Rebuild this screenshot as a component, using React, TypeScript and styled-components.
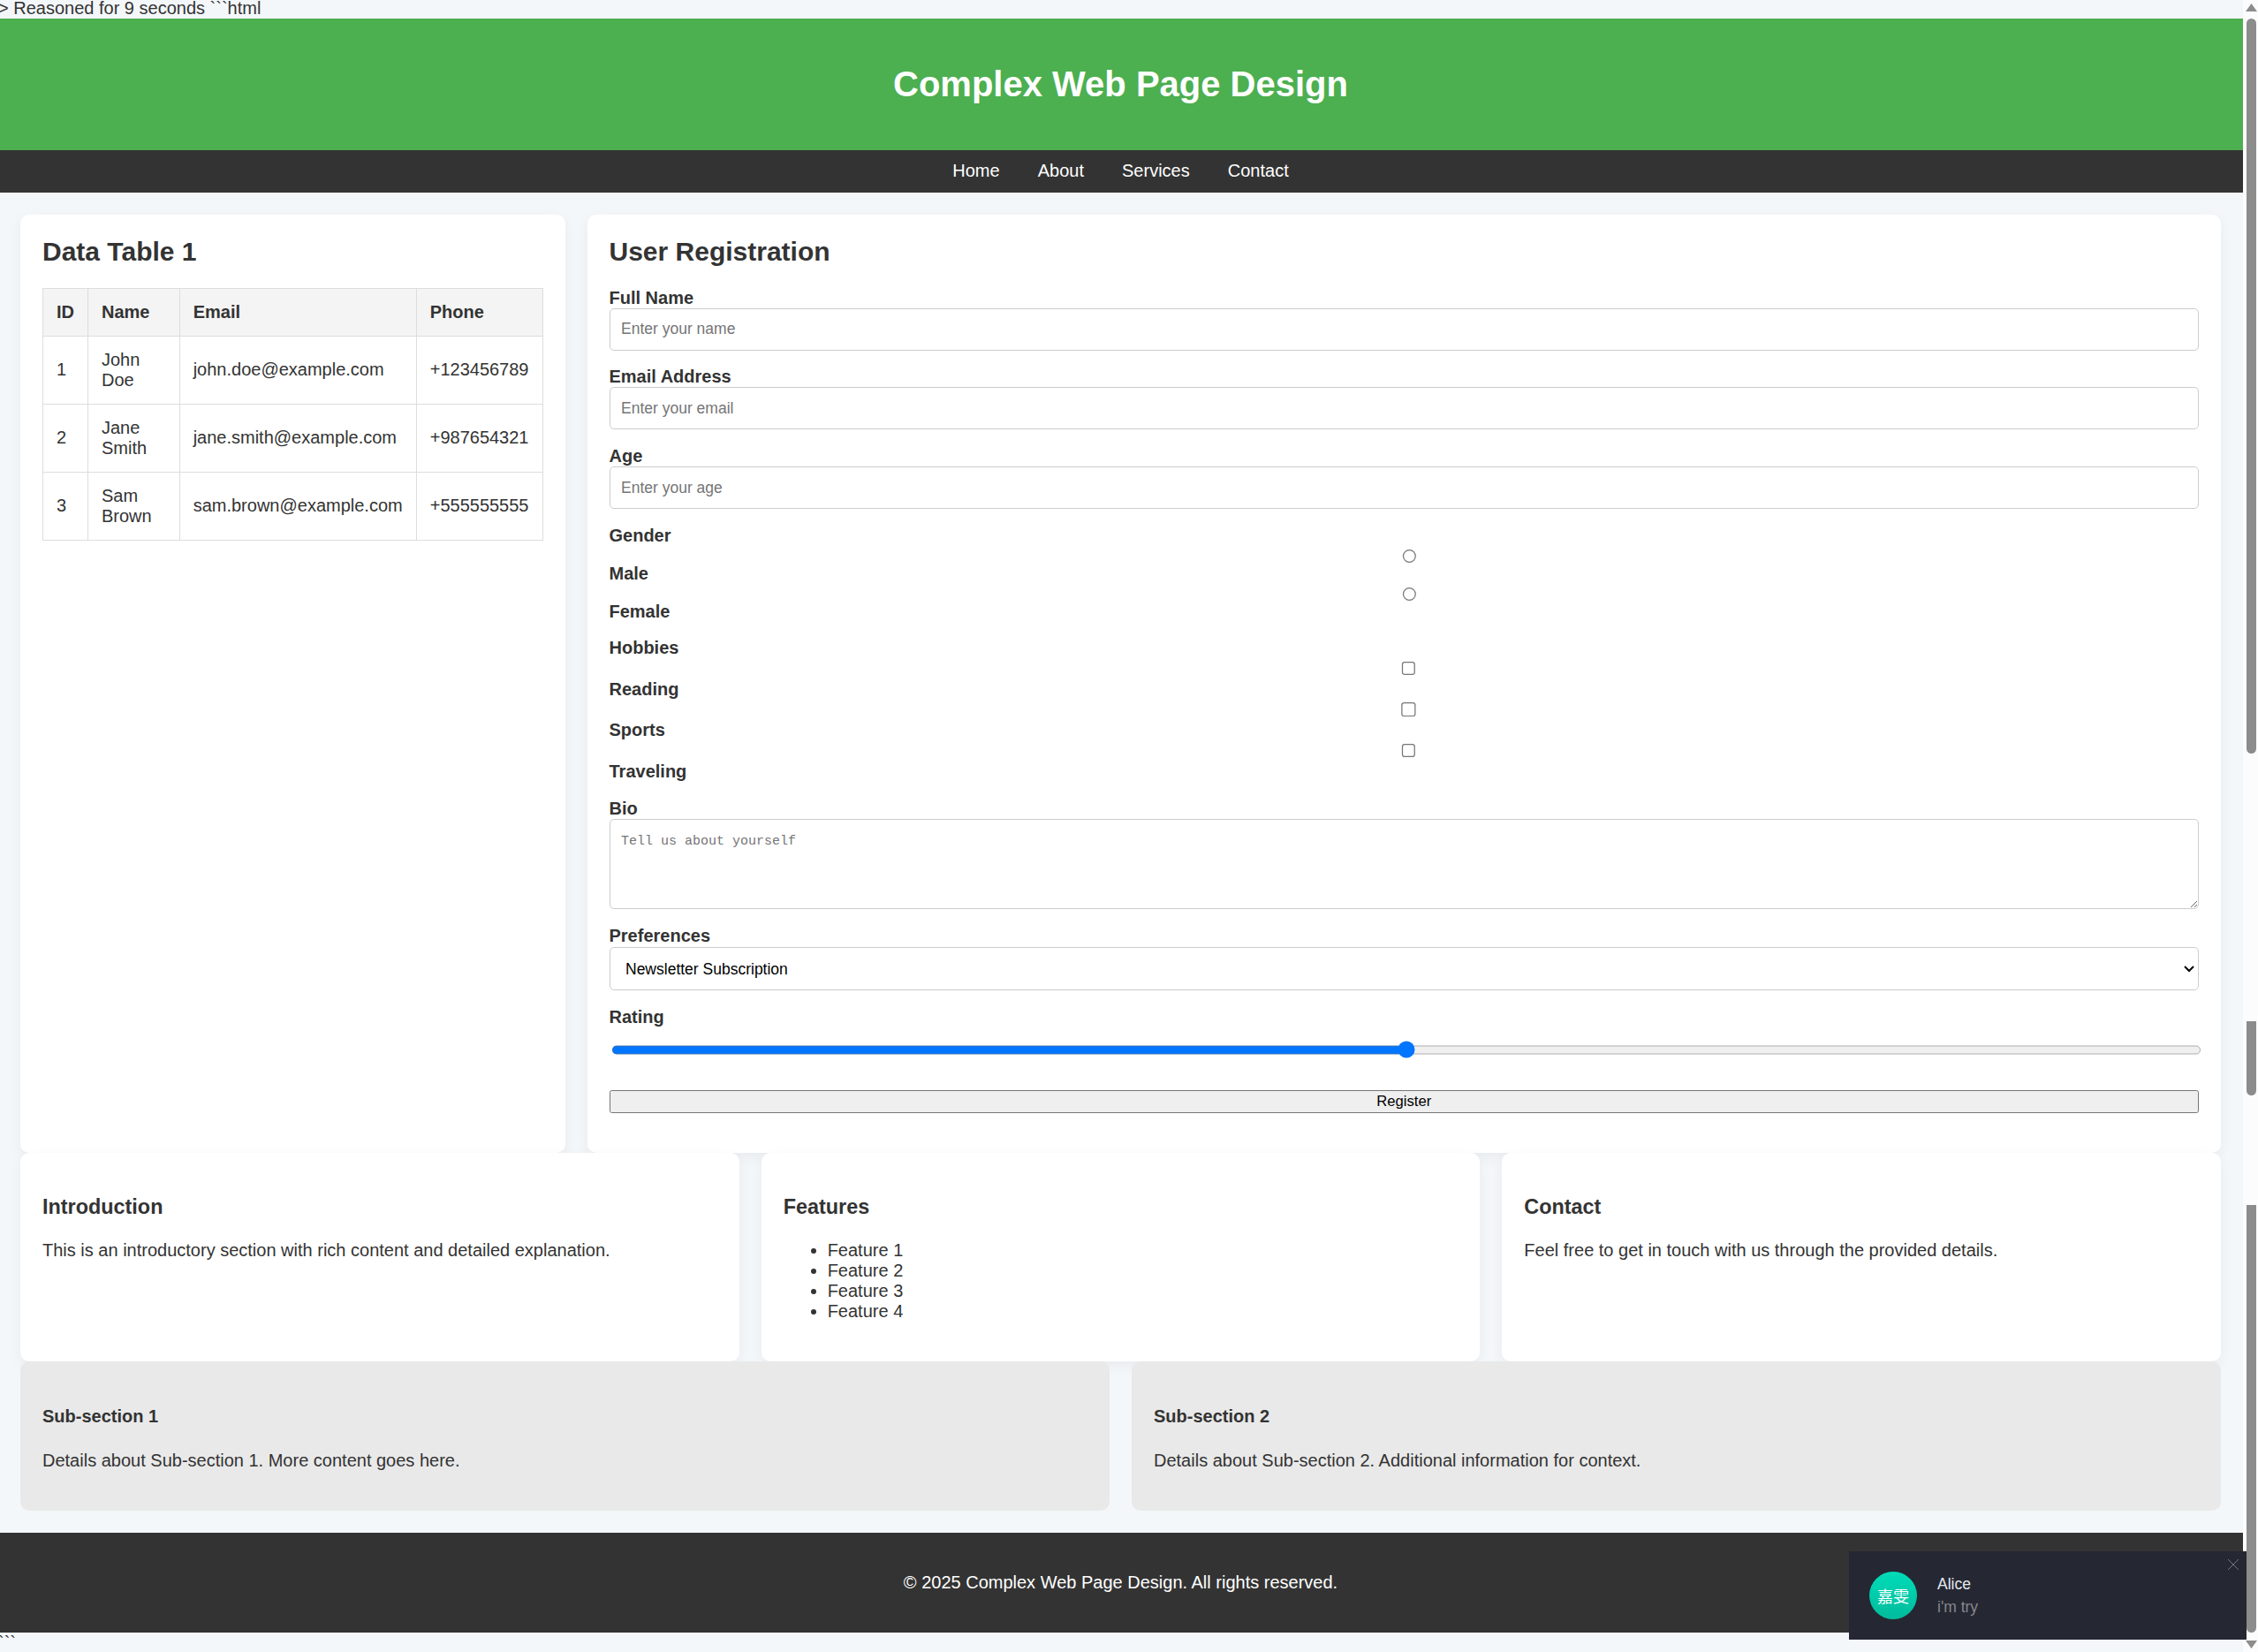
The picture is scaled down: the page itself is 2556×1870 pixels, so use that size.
import { FC } from 'react';
import styled, { createGlobalStyle } from 'styled-components';

const GlobalStyle = createGlobalStyle`
  html, body {
    margin: 0;
    width: 2556px;
    height: 1870px;
    overflow: hidden;
    background: #f4f7fa;
  }
`;

// the capture was taken at 125% browser zoom, scrolled 2px right and down
const Page = styled.div`
  zoom: 1.25;
  width: 2032.8px;
  margin: -1.6px 0 0 -1.6px;
  font-family: 'Liberation Sans', Arial, sans-serif;
  font-size: 16px;
  color: #333;
`;

const Header = styled.header`
  background: #4caf50;
  color: #fff;
  padding: 20px;
  text-align: center;
`;

const Title = styled.h1`
  margin: 21.44px 0;
  font-size: 32px;
`;

const Nav = styled.nav`
  display: flex;
  justify-content: center;
  gap: 34.45px;
  background: #333;
  padding: 10px;
`;

const NavLink = styled.a`
  color: #fff;
  text-decoration: none;
`;

const MainGrid = styled.div`
  display: grid;
  grid-template-columns: 1fr 3fr;
  gap: 20px;
  padding: 20px 20px 0;
`;

const Card = styled.section`
  min-width: 0;
  background: #fff;
  border-radius: 8px;
  padding: 20px;
  box-shadow: 0 4px 12px rgba(0, 0, 0, 0.05);
`;

const CardTitle = styled.h2`
  margin: 0 0 19.2px;
  font-size: 24px;
`;

const Table = styled.table`
  width: 100%;
  border-collapse: collapse;
`;

const HeadCell = styled.th`
  border: 1px solid #ddd;
  padding: 12px;
  text-align: left;
  background: #f4f4f4;
`;

const Cell = styled.td`
  border: 1px solid #ddd;
  padding: 12px;
`;

const Field = styled.div<{ $gap?: number }>`
  margin-bottom: ${props => props.$gap ?? 15}px;
`;

const Label = styled.label`
  display: block;
  font-weight: bold;
`;

const TextInput = styled.input`
  display: block;
  width: 100%;
  height: 38.4px;
  padding: 10px;
  box-sizing: border-box;
  border: 1px solid #ccc;
  border-radius: 4px;
  font-family: 'Liberation Sans', Arial, sans-serif;
  font-size: 14px;
`;

const Radio = styled.input`
  display: block;
  width: 100%;
  height: 13px;
  margin: 3px 3px 0 5px;
`;

const Checkbox = styled.input`
  display: block;
  width: 100%;
  height: 13px;
  margin: 3px 3px 3px 4px;
`;

const TextArea = styled.textarea`
  display: block;
  width: 100%;
  height: 82px;
  padding: 10px;
  box-sizing: border-box;
  border: 1px solid #ccc;
  border-radius: 4px;
  font-family: 'Liberation Mono', 'Courier New', monospace;
  font-size: 12px;
  line-height: 20px;
`;

const Select = styled.select`
  display: block;
  width: 100%;
  height: 39px;
  margin-top: 0.8px;
  padding: 10px;
  box-sizing: border-box;
  border: 1px solid #ccc;
  border-radius: 4px;
  background: #fff;
  color: #000;
  font-family: 'Liberation Sans', Arial, sans-serif;
  font-size: 14px;
`;

const RangeInput = styled.input`
  display: block;
  width: 100%;
  height: 36px;
  padding: 10px 0;
  box-sizing: border-box;
  margin: 2px 2px 18.8px;
`;

const SubmitButton = styled.button`
  display: block;
  width: 100%;
  height: 20.6px;
  margin-bottom: 16px;
  padding: 1px 6px;
  font-family: 'Liberation Sans', Arial, sans-serif;
  font-size: 13.333px;
`;

const InfoRow = styled.div`
  display: grid;
  grid-template-columns: repeat(3, 1fr);
  gap: 20px;
  padding: 0 20px;
`;

const InfoTitle = styled.h3`
  margin: 18.72px 0;
  font-size: 18.72px;
`;

const Paragraph = styled.p`
  margin: 16px 0;
`;

const FeatureList = styled.ul`
  margin: 16px 0;
  padding-left: 40px;
`;

const SubRow = styled.div`
  display: grid;
  grid-template-columns: repeat(2, 1fr);
  gap: 20px;
  padding: 0 20px;
  margin-bottom: 20px;
`;

const SubCard = styled.section`
  background: #e9e9e9;
  border-radius: 8px;
  padding: 20px;
`;

const SubTitle = styled.h4`
  margin: 21.28px 0;
  font-size: 16px;
`;

const Footer = styled.footer`
  background: #333;
  color: #fff;
  padding: 20px;
  text-align: center;
`;

const ScrollTrack = styled.div`
  position: fixed;
  top: 0;
  right: 0;
  bottom: 0;
  width: 17px;
  background: #fcfcfc;
`;

const ScrollThumb = styled.div<{ $top: number; $height: number; $roundTop?: boolean }>`
  position: absolute;
  left: 4px;
  top: ${props => props.$top}px;
  width: 11px;
  height: ${props => props.$height}px;
  background: #8c8c8c;
  border-radius: ${props => (props.$roundTop ? '6px 6px' : '0 0')} 6px 6px;
`;

const ScrollArrow = styled.svg<{ $top: number }>`
  position: absolute;
  left: 3px;
  top: ${props => props.$top}px;
  display: block;
`;

const Toast = styled.div`
  position: fixed;
  right: 13px;
  bottom: 14px;
  width: 450px;
  height: 100px;
  box-sizing: border-box;
  padding-left: 23px;
  display: flex;
  align-items: center;
  gap: 23px;
  background: #252833;
  font-family: 'Liberation Sans', Arial, sans-serif;
  font-size: 17.5px;
`;

const Avatar = styled.div`
  width: 54px;
  height: 54px;
  border-radius: 50%;
  display: flex;
  align-items: center;
  justify-content: center;
  background: linear-gradient(#00dcb8, #00bb9c);
  color: #fff;
  font-family: 'Noto Sans CJK SC', sans-serif;
  font-size: 18px;
`;

const ToastText = styled.div`
  display: flex;
  flex-direction: column;
  gap: 5px;
`;

const ToastName = styled.div`
  color: #e6e8ee;
`;

const ToastMessage = styled.div`
  color: #85878d;
`;

const ToastClose = styled.svg`
  position: absolute;
  top: 9px;
  right: 9px;
`;

const rows = [
  { id: 1, name: 'John Doe', email: 'john.doe@example.com', phone: '+123456789' },
  { id: 2, name: 'Jane Smith', email: 'jane.smith@example.com', phone: '+987654321' },
  { id: 3, name: 'Sam Brown', email: 'sam.brown@example.com', phone: '+555555555' },
];

const App: FC = () => {
  return (
    <>
      <GlobalStyle />
      <Page>
        {'> Reasoned for 9 seconds ```html'}
        <Header>
          <Title>Complex Web Page Design</Title>
        </Header>
        <Nav>
          <NavLink href="#home">Home</NavLink>
          <NavLink href="#about">About</NavLink>
          <NavLink href="#services">Services</NavLink>
          <NavLink href="#contact">Contact</NavLink>
        </Nav>
        <MainGrid>
          <Card>
            <CardTitle>Data Table 1</CardTitle>
            <Table>
              <thead>
                <tr>
                  <HeadCell>ID</HeadCell>
                  <HeadCell>Name</HeadCell>
                  <HeadCell>Email</HeadCell>
                  <HeadCell>Phone</HeadCell>
                </tr>
              </thead>
              <tbody>
                {rows.map(row => (
                  <tr key={row.id}>
                    <Cell>{row.id}</Cell>
                    <Cell>{row.name}</Cell>
                    <Cell>{row.email}</Cell>
                    <Cell>{row.phone}</Cell>
                  </tr>
                ))}
              </tbody>
            </Table>
          </Card>
          <Card>
            <CardTitle>User Registration</CardTitle>
            <form>
              <Field>
                <Label htmlFor="name">Full Name</Label>
                <TextInput id="name" type="text" placeholder="Enter your name" />
              </Field>
              <Field>
                <Label htmlFor="email">Email Address</Label>
                <TextInput id="email" type="email" placeholder="Enter your email" />
              </Field>
              <Field>
                <Label htmlFor="age">Age</Label>
                <TextInput id="age" type="text" placeholder="Enter your age" />
              </Field>
              <Field $gap={14.4}>
                <Label>Gender</Label>
                <Radio type="radio" id="male" name="gender" />
                <Label htmlFor="male">Male</Label>
                <Radio type="radio" id="female" name="gender" />
                <Label htmlFor="female">Female</Label>
              </Field>
              <Field>
                <Label>Hobbies</Label>
                <Checkbox type="checkbox" id="reading" />
                <Label htmlFor="reading">Reading</Label>
                <Checkbox type="checkbox" id="sports" />
                <Label htmlFor="sports">Sports</Label>
                <Checkbox type="checkbox" id="traveling" />
                <Label htmlFor="traveling">Traveling</Label>
              </Field>
              <Field>
                <Label htmlFor="bio">Bio</Label>
                <TextArea id="bio" placeholder="Tell us about yourself" />
              </Field>
              <Field $gap={15.4}>
                <Label htmlFor="prefs">Preferences</Label>
                <Select id="prefs" defaultValue="newsletter">
                  <option value="newsletter">Newsletter Subscription</option>
                </Select>
              </Field>
              <Label htmlFor="rating">Rating</Label>
              <RangeInput id="rating" type="range" min={0} max={100} defaultValue={50} />
              <SubmitButton type="button">Register</SubmitButton>
            </form>
          </Card>
        </MainGrid>
        <InfoRow>
          <Card>
            <InfoTitle>Introduction</InfoTitle>
            <Paragraph>This is an introductory section with rich content and detailed explanation.</Paragraph>
          </Card>
          <Card>
            <InfoTitle>Features</InfoTitle>
            <FeatureList>
              <li>Feature 1</li>
              <li>Feature 2</li>
              <li>Feature 3</li>
              <li>Feature 4</li>
            </FeatureList>
          </Card>
          <Card>
            <InfoTitle>Contact</InfoTitle>
            <Paragraph>Feel free to get in touch with us through the provided details.</Paragraph>
          </Card>
        </InfoRow>
        <SubRow>
          <SubCard>
            <SubTitle>Sub-section 1</SubTitle>
            <Paragraph>Details about Sub-section 1. More content goes here.</Paragraph>
          </SubCard>
          <SubCard>
            <SubTitle>Sub-section 2</SubTitle>
            <Paragraph>Details about Sub-section 2. Additional information for context.</Paragraph>
          </SubCard>
        </SubRow>
        <Footer>
          <Paragraph>© 2025 Complex Web Page Design. All rights reserved.</Paragraph>
        </Footer>
        {'```'}
      </Page>
      <ScrollTrack>
        <ScrollArrow $top={4} width="13" height="9" viewBox="0 0 13 9">
          <path d="M6.5 0 13 9H0z" fill="#8c8c8c" />
        </ScrollArrow>
        <ScrollThumb $top={21} $height={832} $roundTop />
        <ScrollThumb $top={1156} $height={84} />
        <ScrollThumb $top={1364} $height={484} />
        <ScrollArrow $top={1857} width="13" height="9" viewBox="0 0 13 9">
          <path d="M0 0h13L6.5 9z" fill="#8c8c8c" />
        </ScrollArrow>
      </ScrollTrack>
      <Toast>
        <Avatar>嘉雯</Avatar>
        <ToastText>
          <ToastName>Alice</ToastName>
          <ToastMessage>i'm try</ToastMessage>
        </ToastText>
        <ToastClose width="12" height="12" viewBox="0 0 12 12">
          <path d="M0 0 12 12M12 0 0 12" stroke="#74767c" strokeWidth="1" fill="none" />
        </ToastClose>
      </Toast>
    </>
  );
};

export default App;
